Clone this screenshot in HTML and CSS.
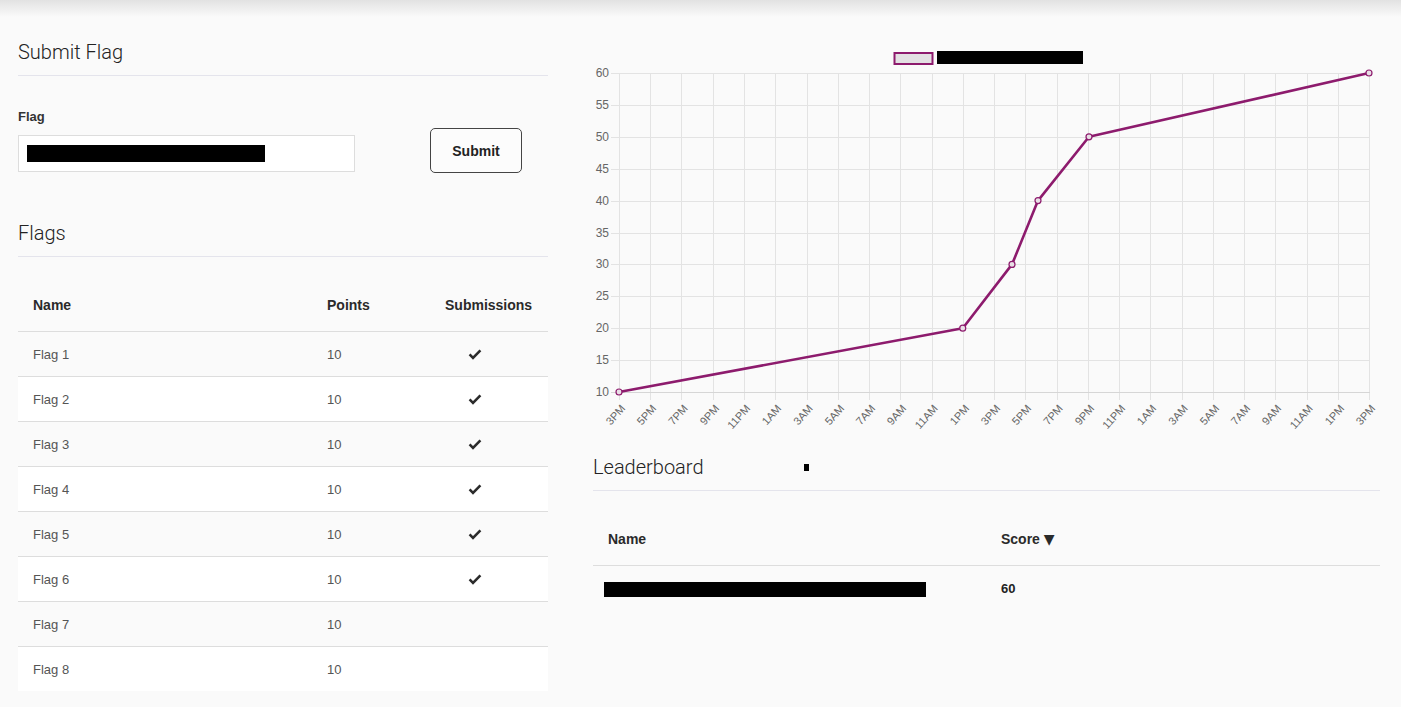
FILE: index.html
```html
<!DOCTYPE html>
<html lang="en">
<head>
<meta charset="utf-8">
<title>Scoreboard</title>
<link rel="stylesheet" href="styles.css">
</head>
<body>
<div class="page">
  <section class="col-left">
    <h2 class="title">Submit Flag</h2>
    <form class="flag-form">
      <div class="field">
        <label class="label">Flag</label>
        <div class="input"><span class="redact redact-input"></span></div>
      </div>
      <button type="button" class="btn">Submit</button>
    </form>

    <h2 class="title title-flags">Flags</h2>
    <table class="table">
      <thead>
        <tr><th class="c-name">Name</th><th class="c-points">Points</th><th class="c-sub">Submissions</th></tr>
      </thead>
      <tbody>
        <tr><td>Flag 1</td><td>10</td><td class="check"><svg class="ico-check" width="14" height="11" viewBox="0 0 14 11"><path d="M1.6 5.4 L5 8.8 L12.4 1.4" /></svg></td></tr>
        <tr><td>Flag 2</td><td>10</td><td class="check"><svg class="ico-check" width="14" height="11" viewBox="0 0 14 11"><path d="M1.6 5.4 L5 8.8 L12.4 1.4" /></svg></td></tr>
        <tr><td>Flag 3</td><td>10</td><td class="check"><svg class="ico-check" width="14" height="11" viewBox="0 0 14 11"><path d="M1.6 5.4 L5 8.8 L12.4 1.4" /></svg></td></tr>
        <tr><td>Flag 4</td><td>10</td><td class="check"><svg class="ico-check" width="14" height="11" viewBox="0 0 14 11"><path d="M1.6 5.4 L5 8.8 L12.4 1.4" /></svg></td></tr>
        <tr><td>Flag 5</td><td>10</td><td class="check"><svg class="ico-check" width="14" height="11" viewBox="0 0 14 11"><path d="M1.6 5.4 L5 8.8 L12.4 1.4" /></svg></td></tr>
        <tr><td>Flag 6</td><td>10</td><td class="check"><svg class="ico-check" width="14" height="11" viewBox="0 0 14 11"><path d="M1.6 5.4 L5 8.8 L12.4 1.4" /></svg></td></tr>
        <tr><td>Flag 7</td><td>10</td><td class="check"></td></tr>
        <tr><td>Flag 8</td><td>10</td><td class="check"></td></tr>
      </tbody>
    </table>
  </section>

  <section class="col-right">
    <svg class="chart" width="787" height="400" viewBox="0 0 787 400">
      <g class="legend">
        <rect class="legend-box" x="301.5" y="13" width="38" height="11" />
        <rect x="344" y="11" width="146" height="13" fill="#000" />
      </g>
      <g class="grid">
        <line x1="18" y1="33.5" x2="776" y2="33.5"/>
        <line x1="18" y1="65.5" x2="776" y2="65.5"/>
        <line x1="18" y1="97.5" x2="776" y2="97.5"/>
        <line x1="18" y1="129.5" x2="776" y2="129.5"/>
        <line x1="18" y1="161.5" x2="776" y2="161.5"/>
        <line x1="18" y1="193.5" x2="776" y2="193.5"/>
        <line x1="18" y1="224.5" x2="776" y2="224.5"/>
        <line x1="18" y1="256.5" x2="776" y2="256.5"/>
        <line x1="18" y1="288.5" x2="776" y2="288.5"/>
        <line x1="18" y1="320.5" x2="776" y2="320.5"/>
        <line x1="26.5" y1="33" x2="26.5" y2="360"/>
        <line x1="57.5" y1="33" x2="57.5" y2="360"/>
        <line x1="88.5" y1="33" x2="88.5" y2="360"/>
        <line x1="120.5" y1="33" x2="120.5" y2="360"/>
        <line x1="151.5" y1="33" x2="151.5" y2="360"/>
        <line x1="182.5" y1="33" x2="182.5" y2="360"/>
        <line x1="214.5" y1="33" x2="214.5" y2="360"/>
        <line x1="245.5" y1="33" x2="245.5" y2="360"/>
        <line x1="276.5" y1="33" x2="276.5" y2="360"/>
        <line x1="307.5" y1="33" x2="307.5" y2="360"/>
        <line x1="339.5" y1="33" x2="339.5" y2="360"/>
        <line x1="370.5" y1="33" x2="370.5" y2="360"/>
        <line x1="401.5" y1="33" x2="401.5" y2="360"/>
        <line x1="432.5" y1="33" x2="432.5" y2="360"/>
        <line x1="464.5" y1="33" x2="464.5" y2="360"/>
        <line x1="495.5" y1="33" x2="495.5" y2="360"/>
        <line x1="526.5" y1="33" x2="526.5" y2="360"/>
        <line x1="557.5" y1="33" x2="557.5" y2="360"/>
        <line x1="589.5" y1="33" x2="589.5" y2="360"/>
        <line x1="620.5" y1="33" x2="620.5" y2="360"/>
        <line x1="651.5" y1="33" x2="651.5" y2="360"/>
        <line x1="682.5" y1="33" x2="682.5" y2="360"/>
        <line x1="714.5" y1="33" x2="714.5" y2="360"/>
        <line x1="745.5" y1="33" x2="745.5" y2="360"/>
        <line x1="776.5" y1="33" x2="776.5" y2="360"/>
      </g>
      <line class="axis" x1="18" y1="352.5" x2="777" y2="352.5"/>
      <g class="ylabels">
        <text x="16" y="37">60</text>
        <text x="16" y="69">55</text>
        <text x="16" y="101">50</text>
        <text x="16" y="133">45</text>
        <text x="16" y="165">40</text>
        <text x="16" y="197">35</text>
        <text x="16" y="228">30</text>
        <text x="16" y="260">25</text>
        <text x="16" y="292">20</text>
        <text x="16" y="324">15</text>
        <text x="16" y="356">10</text>
      </g>
      <g class="xlabels">
        <text transform="translate(33,369) rotate(-48)">3PM</text>
        <text transform="translate(64,369) rotate(-48)">5PM</text>
        <text transform="translate(95.5,369) rotate(-48)">7PM</text>
        <text transform="translate(127,369) rotate(-48)">9PM</text>
        <text transform="translate(158,369) rotate(-48)">11PM</text>
        <text transform="translate(189,369) rotate(-48)">1AM</text>
        <text transform="translate(220.5,369) rotate(-48)">3AM</text>
        <text transform="translate(252,369) rotate(-48)">5AM</text>
        <text transform="translate(283,369) rotate(-48)">7AM</text>
        <text transform="translate(314,369) rotate(-48)">9AM</text>
        <text transform="translate(345.5,369) rotate(-48)">11AM</text>
        <text transform="translate(377,369) rotate(-48)">1PM</text>
        <text transform="translate(408,369) rotate(-48)">3PM</text>
        <text transform="translate(439,369) rotate(-48)">5PM</text>
        <text transform="translate(470.5,369) rotate(-48)">7PM</text>
        <text transform="translate(502,369) rotate(-48)">9PM</text>
        <text transform="translate(533,369) rotate(-48)">11PM</text>
        <text transform="translate(564,369) rotate(-48)">1AM</text>
        <text transform="translate(595.5,369) rotate(-48)">3AM</text>
        <text transform="translate(627,369) rotate(-48)">5AM</text>
        <text transform="translate(658,369) rotate(-48)">7AM</text>
        <text transform="translate(689,369) rotate(-48)">9AM</text>
        <text transform="translate(720.5,369) rotate(-48)">11AM</text>
        <text transform="translate(752,369) rotate(-48)">1PM</text>
        <text transform="translate(783,369) rotate(-48)">3PM</text>
      </g>
      <polyline class="series" points="26,352 369.75,288.2 419,224.4 445,160.6 496,96.8 776,33"/>
      <g class="points">
        <circle cx="26" cy="352" r="3"/>
        <circle cx="369.75" cy="288.2" r="3"/>
        <circle cx="419" cy="224.4" r="3"/>
        <circle cx="445" cy="160.6" r="3"/>
        <circle cx="496" cy="96.8" r="3"/>
        <circle cx="776" cy="33" r="3"/>
      </g>
    </svg>

    <h2 class="title title-lb">Leaderboard<span class="redact redact-dot"></span></h2>
    <table class="table table-lb">
      <thead>
        <tr><th class="lb-name">Name</th><th>Score <span class="sort">&#9660;</span></th></tr>
      </thead>
      <tbody>
        <tr><td><span class="redact redact-name"></span></td><td class="score">60</td></tr>
      </tbody>
    </table>
  </section>
</div>
</body>
</html>
```

FILE: styles.css
```css
html, body {
  margin: 0;
  padding: 0;
}

body {
  background: linear-gradient(#e2e2e2, #fafafa 17px) 0 0 / 100% 17px no-repeat, #fafafa;
  font-family: "Liberation Sans", Arial, sans-serif;
  color: #333;
}

.page {
  display: grid;
  grid-template-columns: 530px 787px;
  column-gap: 45px;
  padding: 40px 0 0 18px;
}

.title {
  margin: 0;
  font-family: Roboto, "Liberation Sans", sans-serif;
  font-weight: 300;
  font-size: 20px;
  line-height: 24px;
  color: #222;
  padding-bottom: 11px;
  border-bottom: 1px solid #e4e4ec;
}

.flag-form {
  margin-top: 33px;
  display: flex;
  align-items: flex-end;
}

.field {
  width: 337px;
}

.label {
  display: block;
  font-size: 13px;
  font-weight: bold;
  line-height: 16px;
  margin-bottom: 10px;
  color: #333;
}

.input {
  height: 35px;
  border: 1px solid #ddd;
  background: #fff;
  display: flex;
  align-items: center;
  padding-left: 8px;
}

.redact {
  display: inline-block;
  background: #000;
}

.redact-input {
  width: 238px;
  height: 17px;
}

.btn {
  margin-left: 75px;
  margin-bottom: -1px;
  width: 92px;
  height: 45px;
  border: 1px solid #444;
  border-radius: 5px;
  background: #fcfcfc;
  font-family: "Liberation Sans", Arial, sans-serif;
  font-weight: bold;
  font-size: 14px;
  color: #222;
  padding: 0;
}

.title-flags {
  margin-top: 49px;
}

.table {
  width: 100%;
  border-collapse: separate;
  border-spacing: 0;
  margin-top: 25px;
}

.table th {
  text-align: left;
  font-size: 14px;
  font-weight: bold;
  line-height: 16px;
  color: #2a2a2a;
  padding: 15px 15px 18px;
  border-bottom: 1px solid #ddd;
}

.c-name { width: 264px; }
.c-points { width: 88px; }

.table td {
  height: 44px;
  padding: 1px 15px 0;
  box-sizing: border-box;
  font-size: 13px;
  line-height: 16px;
  color: #555;
  vertical-align: middle;
  border-bottom: 1px solid #ddd;
}

.table tbody td {
  height: 45px;
}

.table tbody tr:last-child td {
  border-bottom: 0;
  height: 44px;
}

.table tbody tr:nth-child(even) td {
  background: #fff;
}

.table td.check {
  padding-left: 38px;
  padding-right: 0;
}

.ico-check {
  display: block;
  fill: none;
  stroke: #2b2b2b;
  stroke-width: 2.6;
}

.chart {
  display: block;
}

.legend-box {
  fill: #e3e1e3;
  stroke: #8d1b6d;
  stroke-width: 2;
}

.grid line {
  stroke: #e3e3e3;
  stroke-width: 1;
}

.axis {
  stroke: #d6d6d6;
  stroke-width: 1;
}

.ylabels text {
  font-family: "Liberation Sans", Arial, sans-serif;
  font-size: 12px;
  fill: #666;
  text-anchor: end;
}

.xlabels text {
  font-family: "Liberation Sans", Arial, sans-serif;
  font-size: 11px;
  fill: #666;
  text-anchor: end;
}

.series {
  fill: none;
  stroke: #8d1b6d;
  stroke-width: 2.6;
  stroke-linejoin: round;
}

.points circle {
  fill: #e8dfe6;
  stroke: #8d1b6d;
  stroke-width: 1.2;
}

.title-lb {
  margin-top: 15px;
}

.redact-dot {
  width: 5px;
  height: 7px;
  margin-left: 100px;
  vertical-align: 3px;
}

.lb-name {
  width: 363px;
}

.sort {
  font-size: 14px;
  font-family: "DejaVu Sans", sans-serif;
}

.redact-name {
  width: 322px;
  height: 15px;
  margin-left: -4px;
  vertical-align: middle;
}

.table td.score {
  font-weight: bold;
  color: #222;
}
```
